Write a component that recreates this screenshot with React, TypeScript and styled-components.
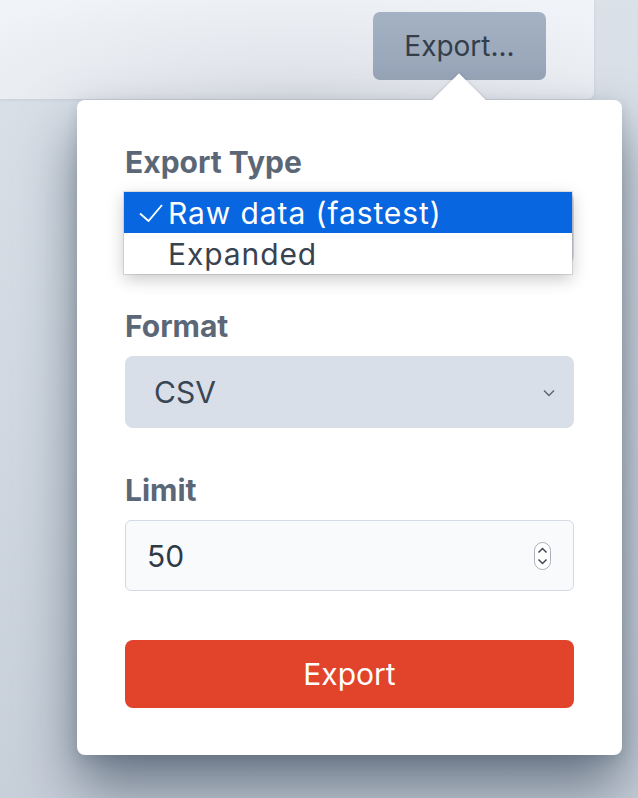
import React from 'react'
import styled, { createGlobalStyle } from 'styled-components'

const GlobalStyle = createGlobalStyle`
  html, body {
    margin: 0;
    padding: 0;
  }

  body {
    font-family: Inter, 'Liberation Sans', sans-serif;
    -webkit-font-smoothing: antialiased;
  }
`

const Page = styled.div`
  width: 638px;
  height: 798px;
  overflow: hidden;
  display: flex;
  flex-direction: column;
  background: linear-gradient(180deg, #dae1e9 0%, #c7cfd9 100%);
`

const Toolbar = styled.div`
  width: 594px;
  height: 99px;
  box-sizing: border-box;
  padding: 12px 48px 0 0;
  display: flex;
  justify-content: flex-end;
  align-items: flex-start;
  background: radial-gradient(ellipse 70% 120% at 50% 100%, #dcdfe5 0%, #e8ebf0 60%, #f0f3f7 100%);
  border-bottom-right-radius: 6px;
  box-shadow: 0 1px 3px rgba(70, 85, 105, 0.12);
`

const ToolbarButton = styled.button`
  width: 173px;
  height: 68px;
  padding: 0;
  border: none;
  border-radius: 7px;
  background: linear-gradient(180deg, #a5b2c4 0%, #97a4b7 100%);
  color: #343e4a;
  font: 400 28px/1 Inter, 'Liberation Sans', sans-serif;
`

const Popover = styled.div`
  position: relative;
  width: 545px;
  margin: 1px 0 0 77px;
  box-sizing: border-box;
  padding: 44px 48px 47px;
  display: flex;
  flex-direction: column;
  background: #fff;
  border-radius: 8px;
  box-shadow: 0 32px 56px rgba(30, 45, 65, 0.55), 0 4px 14px rgba(30, 45, 65, 0.15);
`

const Caret = styled.div`
  position: absolute;
  top: -28px;
  left: 354px;
  width: 56px;
  height: 28px;
  overflow: hidden;

  &::before {
    content: '';
    position: absolute;
    left: 9px;
    top: 9px;
    width: 38px;
    height: 38px;
    background: #fff;
    transform: rotate(45deg);
    box-shadow: 0 0 3px rgba(60, 75, 95, 0.28);
  }
`

const Form = styled.div`
  display: flex;
  flex-direction: column;
  gap: 44px;
`

const Field = styled.div`
  display: flex;
  flex-direction: column;
  gap: 12px;
`

const Label = styled.label`
  font-size: 30px;
  font-weight: 700;
  line-height: 36px;
  color: #5b6776;
`

const ControlWrap = styled.div`
  position: relative;
`

const SelectBox = styled.div`
  height: 72px;
  box-sizing: border-box;
  padding: 0 19px 0 29px;
  display: flex;
  align-items: center;
  justify-content: space-between;
  border-radius: 8px;
  background: #d8dfe8;
  color: #3a4553;
  font-size: 30px;
`

const Chevron = styled.svg`
  width: 12px;
  height: 8px;
  margin-top: 2px;
  margin-left: auto;
`

const OptionList = styled.ul`
  position: absolute;
  top: 0;
  left: -1px;
  z-index: 2;
  width: 448px;
  margin: 0;
  padding: 0;
  list-style: none;
  background: #fff;
  box-shadow: 0 5px 16px rgba(0, 0, 0, 0.22), 0 0 0 1px rgba(0, 0, 0, 0.1);
`

const Option = styled.li<{ $selected?: boolean }>`
  height: 41px;
  padding-left: 15px;
  display: flex;
  align-items: center;
  gap: 5px;
  background: ${({ $selected }) => ($selected ? '#0766e0' : 'transparent')};
  color: ${({ $selected }) => ($selected ? '#fff' : '#38434f')};
  font-size: 30px;
  letter-spacing: 0.9px;
  white-space: nowrap;
`

const CheckSlot = styled.span`
  width: 24px;
  height: 18px;
  display: flex;
  flex-shrink: 0;
`

const NumberBox = styled.div`
  height: 71px;
  box-sizing: border-box;
  padding: 0 22px 0 21px;
  display: flex;
  align-items: center;
  justify-content: space-between;
  border: 1.5px solid #d3dae4;
  border-radius: 6px;
  background: #f8fafc;
  color: #2f3a46;
  font-size: 30px;
`

const Spinner = styled.svg`
  width: 17px;
  height: 28px;
`

const SubmitButton = styled.button`
  height: 68px;
  margin-top: 49px;
  padding: 0;
  border: none;
  border-radius: 8px;
  background: #e2432b;
  color: #fff;
  font: 400 30px/1 Inter, 'Liberation Sans', sans-serif;
`

const options = ['Raw data (fastest)', 'Expanded']

const ChevronDown = () => (
  <Chevron viewBox="0 0 12 8">
    <path d="M1 1.5 L6 6.5 L11 1.5" fill="none" stroke="#5b6573" strokeWidth="1.4" />
  </Chevron>
)

const App = () => {
  return (
    <Page>
      <GlobalStyle />
      <Toolbar>
        <ToolbarButton>Export...</ToolbarButton>
      </Toolbar>
      <Popover>
        <Caret />
        <Form>
          <Field>
            <Label>Export Type</Label>
            <ControlWrap>
              {/* the closed select sits under its open option list */}
              <SelectBox>
                <ChevronDown />
              </SelectBox>
              <OptionList>
                {options.map((option, i) => (
                  <Option key={option} $selected={i === 0}>
                    <CheckSlot>
                      {i === 0 && (
                        <svg viewBox="0 0 24 18" width="24" height="18">
                          <path d="M1 9.5 L9.5 17 L23 1" fill="none" stroke="currentColor" strokeWidth="1.9" />
                        </svg>
                      )}
                    </CheckSlot>
                    {option}
                  </Option>
                ))}
              </OptionList>
            </ControlWrap>
          </Field>
          <Field>
            <Label>Format</Label>
            <SelectBox>
              <span>CSV</span>
              <ChevronDown />
            </SelectBox>
          </Field>
          <Field>
            <Label>Limit</Label>
            <NumberBox>
              <span>50</span>
              <Spinner viewBox="0 0 17 28">
                <rect x="0.5" y="0.5" width="16" height="27" rx="8" fill="#fff" stroke="#a9b0ba" />
                <path d="M4.5 10.5 L8.5 6.5 L12.5 10.5" fill="none" stroke="#3d4753" strokeWidth="1.5" />
                <path d="M4.5 17.5 L8.5 21.5 L12.5 17.5" fill="none" stroke="#3d4753" strokeWidth="1.5" />
              </Spinner>
            </NumberBox>
          </Field>
        </Form>
        <SubmitButton>Export</SubmitButton>
      </Popover>
    </Page>
  )
}

export default App
